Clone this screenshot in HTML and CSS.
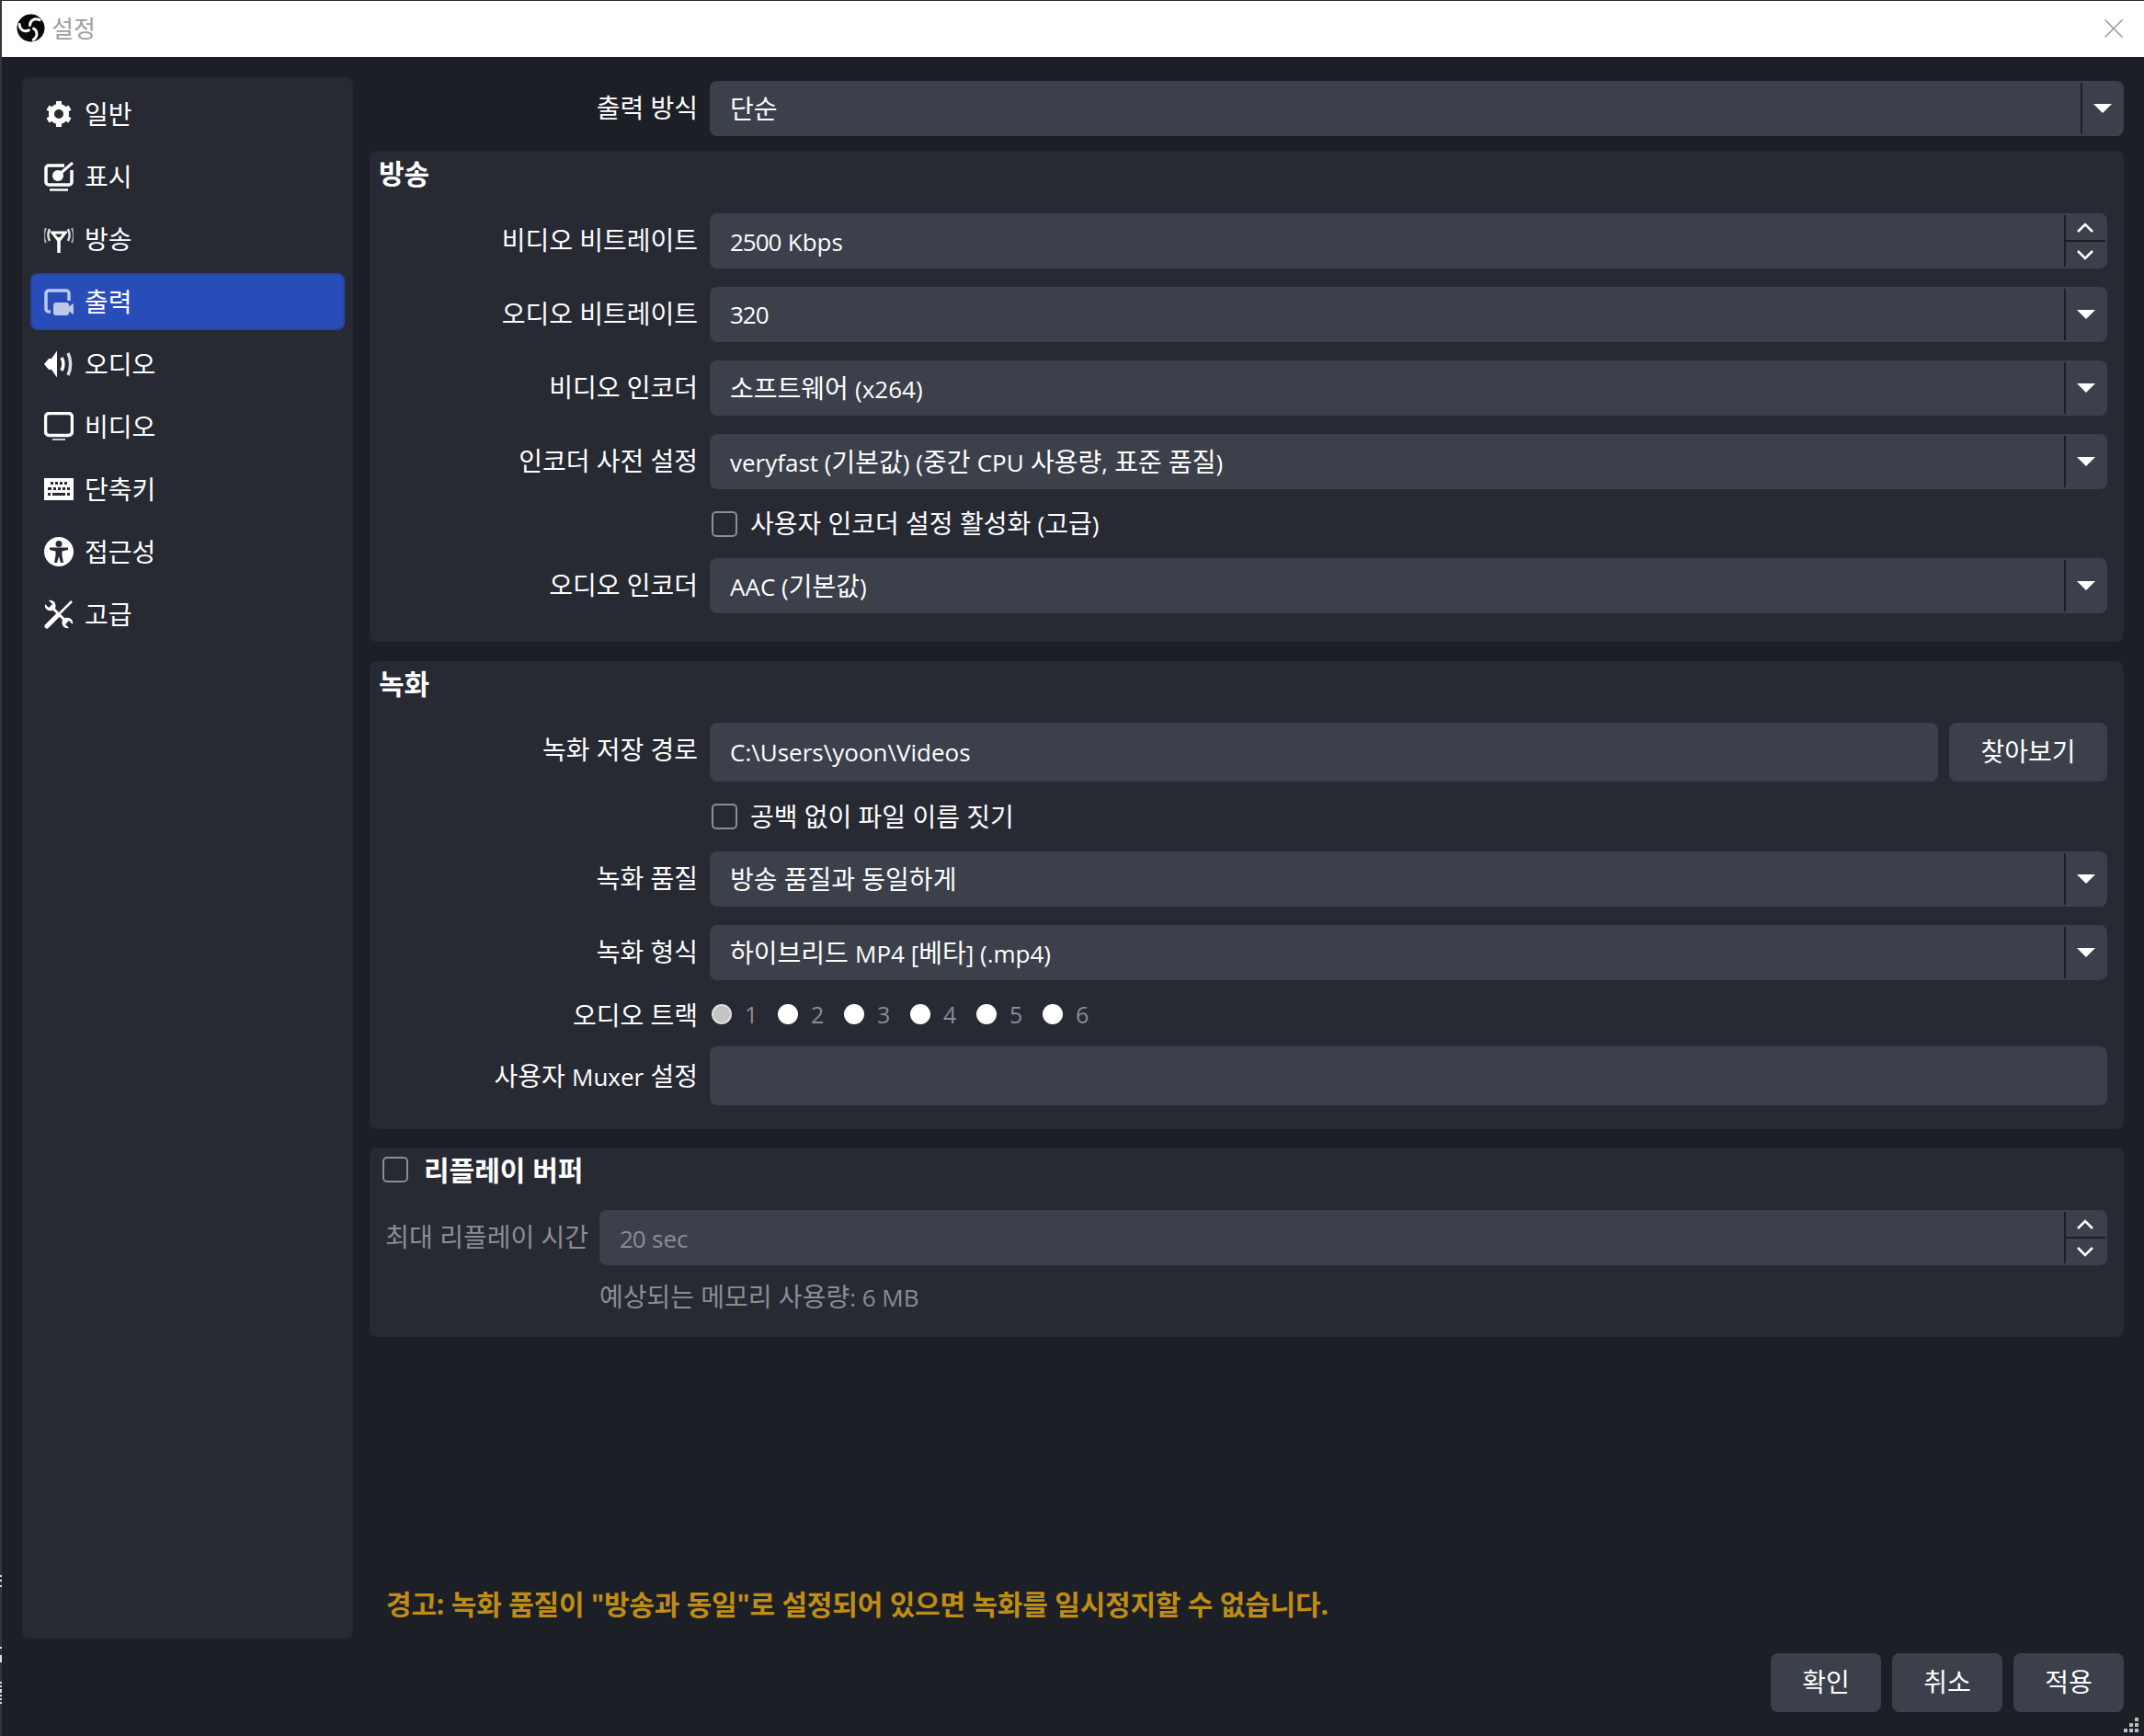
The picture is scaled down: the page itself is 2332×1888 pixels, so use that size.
FILE: index.html
```html
<!DOCTYPE html>
<html lang="ko">
<head>
    <meta charset="UTF-8">
    <title>설정</title>
    <link rel="stylesheet" href="styles.css">
</head>
<body>
<div class="window">
    <div class="titlebar">
        <svg class="logo" viewBox="0 0 32 32">
            <circle cx="16" cy="16" r="15.5" fill="#0a0a0a"/>
            <g id="blades" fill="none" stroke="#fff" stroke-width="3" stroke-linecap="round">
                <path d="M15 13C15 8 20 4 26 7"/>
                <path d="M15 13C15 8 20 4 26 7" transform="rotate(120 16 16)"/>
                <path d="M15 13C15 8 20 4 26 7" transform="rotate(240 16 16)"/>
            </g>
        </svg>
        <span class="title-text">설정</span>
        <svg class="close" viewBox="0 0 20 20"><path d="M.5.500l19 19M19.500.500l-19 19" stroke="#999" stroke-width="1.500" fill="none"/></svg>
    </div>

    <div class="main">
        <div class="sidebar">
            <div class="nav-item">
                <svg class="icon" viewBox="0 0 32 32">
                    <circle cx="16" cy="16" r="11" fill="#fff"/>
                    <path d="M16 2v28M4 9l24 14M4 23L28 9" stroke="#fff" stroke-width="6" fill="none"/>
                    <circle cx="16" cy="16" r="5" fill="#272a33"/>
                </svg>
                <span>일반</span>
            </div>
            <div class="nav-item">
                <svg class="icon" viewBox="0 0 32 32">
                    <path d="M22 4H5a3 3 0 0 0-3 3v15a3 3 0 0 0 3 3h22a3 3 0 0 0 3-3V9" fill="none" stroke="#fff" stroke-width="3.500"/>
                    <circle cx="15" cy="15" r="6" fill="#fff"/>
                    <path d="M16 14L31 1" stroke="#fff" stroke-width="3"/>
                    <path d="M6 30.500h20" stroke="#fff" stroke-width="2.500"/>
                </svg>
                <span>표시</span>
            </div>
            <div class="nav-item">
                <svg class="icon" viewBox="0 0 32 32">
                    <path d="M16 14v17" stroke="#fff" stroke-width="3.500"/>
                    <path d="M9 9l7 9 7-9z" fill="none" stroke="#fff" stroke-width="3"/>
                    <path d="M6 5c-2 4-2 9 0 13M26 5c2 4 2 9 0 13" fill="none" stroke="#ddd" stroke-width="2.500"/>
                    <path d="M2 4c-2.500 5-2.500 11 0 16M30 4c2.500 5 2.500 11 0 16" fill="none" stroke="#aaa" stroke-width="2"/>
                </svg>
                <span>방송</span>
            </div>
            <div class="nav-item active">
                <svg class="icon" viewBox="0 0 32 32">
                    <path d="M7 27H5a3 3 0 0 1-3-3V7a3 3 0 0 1 3-3h19a3 3 0 0 1 3 3v8" fill="none" stroke="#bcc9e8" stroke-width="3.500"/>
                    <rect x="10" y="17" width="17" height="14" rx="3" fill="#bcc9e8"/>
                    <path d="M26 22l6-4v12l-6-4z" fill="#bcc9e8"/>
                </svg>
                <span>출력</span>
            </div>
            <div class="nav-item">
                <svg class="icon" viewBox="0 0 32 32">
                    <path d="M0 16l5-6h3l6-8.500v29L8 22H5z" fill="#fff"/>
                    <path d="M19 9c2.500 4 2.500 10 0 14" fill="none" stroke="#fff" stroke-width="3.500"/>
                    <path d="M26 4c3.500 7 3.500 17 0 24" fill="none" stroke="#ddd" stroke-width="3.500"/>
                </svg>
                <span>오디오</span>
            </div>
            <div class="nav-item">
                <svg class="icon" viewBox="0 0 32 32">
                    <rect x="1.500" y="1.500" width="29" height="24" rx="4" fill="none" stroke="#fff" stroke-width="3.500"/>
                    <path d="M9 30h14" stroke="#ccc" stroke-width="2"/>
                </svg>
                <span>비디오</span>
            </div>
            <div class="nav-item">
                <svg class="icon" viewBox="0 0 32 32">
                    <path fill="#fff" fill-rule="evenodd" d="M0 4h32v24H0zM7 8v3h3V8zM12 8v3h3V8zM17 8v3h3V8zM22 8v3h3V8zM4 14v3h4v-3zM10 14v3h3v-3zM15 14v3h3v-3zM20 14v3h3v-3zM25 14v3h3v-3zM4 20v3h3v-3zM9 20v3h14v-3zM25 20v3h3v-3z"/>
                </svg>
                <span>단축키</span>
            </div>
            <div class="nav-item">
                <svg class="icon" viewBox="0 0 32 32">
                    <circle cx="16" cy="16" r="16" fill="#fff"/>
                    <circle cx="16" cy="7.500" r="3.500" fill="#272a33"/>
                    <path d="M6 11.500h20v2.500l-6.500 1.500V20l1.500 8h-3l-2-7-2 7h-3l1.500-8v-4.500L6 14z" fill="#272a33"/>
                </svg>
                <span>접근성</span>
            </div>
            <div class="nav-item">
                <svg class="icon" viewBox="0 0 32 32">
                    <path d="M30 2L17 15" stroke="#fff" stroke-width="2.500"/>
                    <path d="M15 17L3 29" stroke="#fff" stroke-width="5" stroke-linecap="round"/>
                    <path d="M9 9l14 14" stroke="#fff" stroke-width="3"/>
                    <path d="M1 5l4 4 4-4-4-4c5-1 9 3 7 9l-3 2c-5 1-9-2-8-7z" fill="#fff"/>
                    <path d="M31 27l-4-4-4 4 4 4c-5 1-9-3-7-9l3-2c5-1 9 2 8 7z" fill="#fff"/>
                </svg>
                <span>고급</span>
            </div>
        </div>

        <div class="content">
            <div class="row top-row">
                <label class="row-label">출력 방식</label>
                <div class="field combo">
                    <span class="field-text">단순</span>
                    <span class="arrow-box"><span class="arrow"></span></span>
                </div>
            </div>

            <div class="group group-stream">
                <div class="group-title">방송</div>
                <div class="rows">
                    <div class="row">
                        <label class="row-label">비디오 비트레이트</label>
                        <div class="field combo">
                            <span class="field-text"><span class="en num">2500</span> <span class="en">Kbps</span></span>
                            <span class="spin-box">
                                <span class="spin-btn"><svg class="chev" viewBox="0 0 20 12"><path d="M2 10l8-8 8 8" fill="none" stroke="#fff" stroke-width="2.500"/></svg></span>
                                <span class="spin-btn"><svg class="chev" viewBox="0 0 20 12"><path d="M2 2l8 8 8-8" fill="none" stroke="#fff" stroke-width="2.500"/></svg></span>
                            </span>
                        </div>
                    </div>
                    <div class="row">
                        <label class="row-label">오디오 비트레이트</label>
                        <div class="field combo">
                            <span class="field-text en num">320</span>
                            <span class="arrow-box"><span class="arrow"></span></span>
                        </div>
                    </div>
                    <div class="row">
                        <label class="row-label">비디오 인코더</label>
                        <div class="field combo">
                            <span class="field-text">소프트웨어 <span class="en">(x264)</span></span>
                            <span class="arrow-box"><span class="arrow"></span></span>
                        </div>
                    </div>
                    <div class="row">
                        <label class="row-label">인코더 사전 설정</label>
                        <div class="field combo">
                            <span class="field-text"><span class="en">veryfast (</span>기본값<span class="en">) (</span>중간 <span class="en">CPU</span> 사용량<span class="en">,</span> 표준 품질<span class="en">)</span></span>
                            <span class="arrow-box"><span class="arrow"></span></span>
                        </div>
                    </div>
                    <div class="row check-row">
                        <span class="row-label"></span>
                        <span class="checkbox"></span>
                        <span>사용자 인코더 설정 활성화 <span class="en">(</span>고급<span class="en">)</span></span>
                    </div>
                    <div class="row">
                        <label class="row-label">오디오 인코더</label>
                        <div class="field combo">
                            <span class="field-text"><span class="en">AAC (</span>기본값<span class="en">)</span></span>
                            <span class="arrow-box"><span class="arrow"></span></span>
                        </div>
                    </div>
                </div>
            </div>

            <div class="group group-record">
                <div class="group-title">녹화</div>
                <div class="rows">
                    <div class="row path-row">
                        <label class="row-label">녹화 저장 경로</label>
                        <div class="field tall path-field"><span class="field-text en">C:\Users\yoon\Videos</span></div>
                        <div class="btn browse-btn">찾아보기</div>
                    </div>
                    <div class="row check-row">
                        <span class="row-label"></span>
                        <span class="checkbox"></span>
                        <span>공백 없이 파일 이름 짓기</span>
                    </div>
                    <div class="row">
                        <label class="row-label">녹화 품질</label>
                        <div class="field combo">
                            <span class="field-text">방송 품질과 동일하게</span>
                            <span class="arrow-box"><span class="arrow"></span></span>
                        </div>
                    </div>
                    <div class="row">
                        <label class="row-label">녹화 형식</label>
                        <div class="field combo">
                            <span class="field-text">하이브리드 <span class="en">MP4 [</span>베타<span class="en">] (.mp4)</span></span>
                            <span class="arrow-box"><span class="arrow"></span></span>
                        </div>
                    </div>
                    <div class="row track-row">
                        <label class="row-label">오디오 트랙</label>
                        <div class="tracks">
                            <span class="track"><span class="radio radio-on"></span>1</span>
                            <span class="track"><span class="radio"></span>2</span>
                            <span class="track"><span class="radio"></span>3</span>
                            <span class="track"><span class="radio"></span>4</span>
                            <span class="track"><span class="radio"></span>5</span>
                            <span class="track"><span class="radio"></span>6</span>
                        </div>
                    </div>
                    <div class="row muxer-row">
                        <label class="row-label">사용자 <span class="en">Muxer</span> 설정</label>
                        <div class="field tall"></div>
                    </div>
                </div>
            </div>

            <div class="group group-replay">
                <div class="replay-head">
                    <span class="checkbox"></span>
                    <span class="replay-title">리플레이 버퍼</span>
                </div>
                <div class="row replay-row">
                    <label class="row-label dim">최대 리플레이 시간</label>
                    <div class="field combo">
                        <span class="field-text dim"><span class="en num">20</span> <span class="en">sec</span></span>
                        <span class="spin-box">
                            <span class="spin-btn"><svg class="chev" viewBox="0 0 20 12"><path d="M2 10l8-8 8 8" fill="none" stroke="#fff" stroke-width="2.500"/></svg></span>
                            <span class="spin-btn"><svg class="chev" viewBox="0 0 20 12"><path d="M2 2l8 8 8-8" fill="none" stroke="#fff" stroke-width="2.500"/></svg></span>
                        </span>
                    </div>
                </div>
                <div class="replay-note dim">예상되는 메모리 사용량<span class="en">: 6 MB</span></div>
            </div>

            <div class="warning">경고: 녹화 품질이 "방송과 동일"로 설정되어 있으면 녹화를 일시정지할 수 없습니다.</div>
        </div>
    </div>

    <div class="footer">
        <div class="btn">확인</div>
        <div class="btn">취소</div>
        <div class="btn">적용</div>
    </div>

    <svg class="grip" viewBox="0 0 16 16">
        <path fill="#bdbdbd" d="M12 0h4v4h-4zM6 6h4v4H6zM12 6h4v4h-4zM0 12h4v4H0zM6 12h4v4H6zM12 12h4v4h-4z"/>
    </svg>

    <!-- stray pixels on the window's left edge -->
    <svg class="edge-marks" viewBox="0 0 2 140">
        <path fill="#ddd" d="M0 0h2v2H0zM0 5h2v2H0zM0 11h2v2H0zM0 78h2v2H0zM0 87h2v8H0zM0 116h2v2H0zM0 120h2v2H0zM0 124h2v4H0zM0 130h2v2H0zM0 134h2v2H0zM0 138h2v2H0z"/>
    </svg>
</div>
</body>
</html>
```

FILE: styles.css
```css
* {
    box-sizing: border-box;
}

body {
    margin: 0;
    background-color: #1d1f26;
    color: #fff;
    font-family: "Open Sans", "Noto Sans CJK KR", sans-serif;
    font-size: 28px;
    line-height: 36px;
    overflow: hidden;
}

.en {
    font-size: 26px;
}

.num {
    letter-spacing: -1px;
}

.window {
    position: relative;
    display: flex;
    flex-direction: column;
    width: 2332px;
    height: 1888px;
    border-left: 2px solid #33353b;
}

.titlebar {
    display: flex;
    align-items: center;
    flex: none;
    height: 62px;
    padding: 0 0 2px 16px;
    background-color: #fff;
    border-top: 1px solid #2a2a2a;
}

.logo {
    width: 31px;
    height: 31px;
}

.title-text {
    margin-left: 7px;
    font-size: 26px;
    color: #a0a0a0;
}

.close {
    width: 20px;
    height: 20px;
    margin-left: auto;
    margin-right: 23px;
}

.main {
    display: flex;
    gap: 18px;
    height: 1720px;
    padding: 22px 22px 0 22px;
}

.sidebar {
    display: flex;
    flex-direction: column;
    gap: 6px;
    flex: none;
    width: 360px;
    height: 1698px;
    padding: 9px;
    background-color: #272a33;
    border-radius: 8px;
}

.nav-item {
    display: flex;
    align-items: center;
    gap: 12px;
    height: 62px;
    padding-left: 15px;
    border-radius: 8px;
}

.nav-item.active {
    background-color: #284cb8;
    border: 2px solid #2545a5;
    padding-left: 13px;
}

.icon {
    flex: none;
    width: 32px;
    height: 32px;
}

.content {
    display: flex;
    flex-direction: column;
    flex: 1;
    padding-top: 4px;
}

.row {
    display: flex;
    align-items: center;
}

.row-label {
    flex: none;
    width: 357px;
    margin-right: 13px;
    padding-bottom: 2px;
    text-align: right;
}

.path-row .row-label {
    padding-bottom: 6px;
}

.muxer-row .row-label {
    padding-bottom: 0;
}

.top-row {
    margin-bottom: 16px;
}

.field {
    position: relative;
    display: flex;
    align-items: center;
    flex: 1;
    height: 60px;
    padding-left: 22px;
    background-color: #3c404b;
    border-radius: 8px;
}

.field.tall {
    height: 64px;
}

.field-text {
    flex: 1;
}

.dim {
    color: #8b8d92;
}

.arrow-box {
    display: flex;
    align-items: center;
    justify-content: center;
    flex: none;
    align-self: stretch;
    width: 47px;
    margin: 2px 0;
    padding-right: 1px;
    border-left: 2px solid #1d1f26;
}

.arrow {
    width: 0;
    height: 0;
    border-left: 10px solid transparent;
    border-right: 10px solid transparent;
    border-top: 10px solid #fff;
}

.spin-box {
    display: flex;
    flex-direction: column;
    flex: none;
    align-self: stretch;
    width: 45px;
    margin: 2px 2px 2px 0;
    border-left: 2px solid #1d1f26;
}

.spin-btn {
    display: flex;
    align-items: center;
    justify-content: center;
    flex: 1;
    padding-right: 1px;
}

.spin-btn:first-child {
    border-bottom: 2px solid #1d1f26;
}

.chev {
    width: 20px;
    height: 12px;
}

.group {
    margin-bottom: 21px;
    padding-right: 18px;
    background-color: #272a33;
    border-radius: 8px;
}

.group-stream {
    height: 534px;
}

.group-record {
    height: 509px;
    margin-bottom: 20px;
}

.group-replay {
    height: 206px;
    margin-bottom: 0;
}

.group-title {
    height: 68px;
    padding: 7px 0 0 10px;
    font-size: 30px;
    font-weight: 700;
}

.group-record .group-title {
    height: 67px;
}

.rows {
    display: flex;
    flex-direction: column;
    gap: 20px;
}

.check-row {
    height: 36px;
}

.group-stream .check-row {
    height: 35px;
}

.checkbox {
    flex: none;
    width: 28px;
    height: 28px;
    margin-right: 14px;
    background-color: transparent;
    border: 2px solid #8b8d92;
    border-radius: 5px;
}

.check-row .checkbox {
    margin-left: 2px;
}

.path-field {
    flex: none;
    width: 1336px;
}

.btn {
    display: flex;
    align-items: center;
    justify-content: center;
    flex: none;
    width: 120px;
    height: 64px;
    padding-bottom: 2px;
    background-color: #3c404b;
    border-radius: 8px;
}

.browse-btn {
    width: 172px;
    margin-left: 12px;
}

.track-row {
    height: 32px;
    position: relative;
    top: 1px;
}

.track-row .row-label {
    padding: 1px 0 0;
}

.tracks {
    display: flex;
    padding-left: 2px;
}

.track {
    display: flex;
    align-items: center;
    width: 72px;
    color: #8b8d92;
    font-size: 25px;
}

.radio {
    flex: none;
    width: 22px;
    height: 22px;
    margin-right: 14px;
    background-color: #fff;
    border-radius: 50%;
}

.radio-on {
    background-color: #c4c4c4;
    border: 2px solid #e0e0e0;
}

.replay-head {
    display: flex;
    align-items: center;
    height: 48px;
    margin-bottom: 20px;
    padding-left: 14px;
}

.replay-head .checkbox {
    margin-right: 17px;
}

.replay-title {
    padding-top: 2px;
    font-size: 30px;
    font-weight: 700;
}

.replay-row .row-label {
    width: 238px;
    margin-right: 12px;
}

.replay-note {
    margin: 16px 0 0 250px;
}

.warning {
    margin-top: auto;
    margin-bottom: 19px;
    padding-left: 18px;
    color: #c08d14;
    font-size: 30px;
    font-weight: 700;
    letter-spacing: -0.2px;
}

.footer {
    display: flex;
    justify-content: flex-end;
    gap: 12px;
    padding: 16px 22px 0 0;
}

.grip {
    position: absolute;
    right: 6px;
    bottom: 4px;
    width: 16px;
    height: 16px;
}

.edge-marks {
    position: absolute;
    left: -2px;
    top: 1713px;
    width: 2px;
    height: 140px;
}
```
